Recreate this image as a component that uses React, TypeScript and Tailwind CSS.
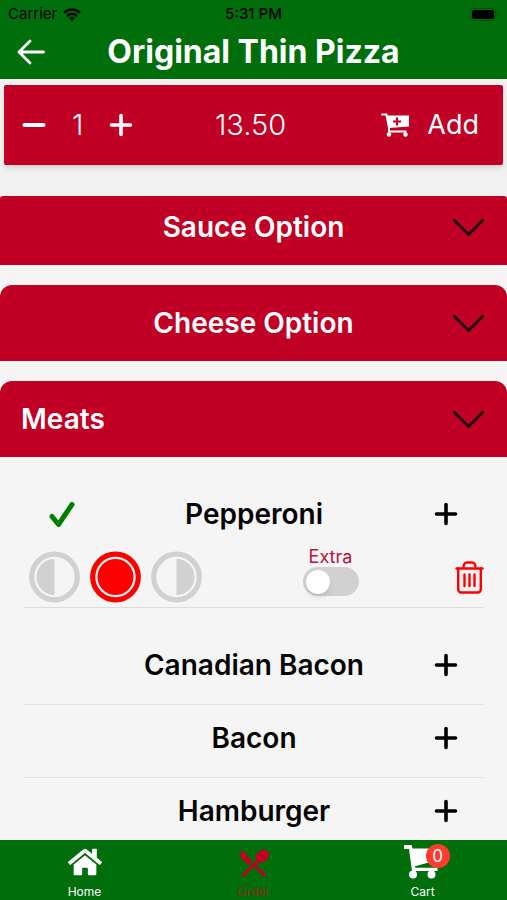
import { useState } from "react";
import { FaHome } from "react-icons/fa";
import { MdRestaurantMenu } from "react-icons/md";

const PORTIONS = ["left", "whole", "right"] as const;
type Portion = (typeof PORTIONS)[number];

const MEATS = ["Canadian Bacon", "Bacon", "Hamburger"];

function StatusBar() {
  return (
    <div className="grid h-7 grid-cols-3 items-center px-2 text-[15px] text-black">
      <div className="flex items-center gap-1.5">
        <span>Carrier</span>
        <svg width="18" height="13" viewBox="0 0 18 13" fill="none" stroke="currentColor" strokeWidth="2.4">
          <path d="M1 4.800C5.600.4 12.400.4 17 4.800" />
          <path d="M4 8c2.900-2.700 7.100-2.700 10 0" />
          <path d="M9 13 6 9.900c1.700-1.500 4.300-1.500 6 0Z" fill="currentColor" stroke="none" />
        </svg>
      </div>
      <span className="text-center font-medium">5:31 PM</span>
      <svg className="justify-self-end" width="29" height="13" viewBox="0 0 29 13">
        <rect x="0.5" y="0.5" width="25" height="12" rx="3.500" fill="none" stroke="#054f08" />
        <rect x="2" y="2" width="22" height="9" rx="2" fill="#000" />
        <path d="M27 4.500c1.500.8 1.500 3.200 0 4Z" fill="#054f08" />
      </svg>
    </div>
  );
}

function Plus() {
  return (
    <svg width="24" height="24" viewBox="0 0 24 24" fill="none" stroke="currentColor" strokeWidth="3.600" strokeLinecap="round">
      <path d="M12 2.500v19M2.500 12h19" />
    </svg>
  );
}

function AddCartIcon() {
  return (
    <svg width="28" height="24" viewBox="0 0 28 24" fill="none">
      <path d="M1 1.500h4.500L8 15v3.500" stroke="#fff" strokeWidth="2" strokeLinecap="round" strokeLinejoin="round" />
      <path d="M6 2.500h22v11L8 15Z" fill="#fff" />
      <path d="M8 18.500h16.500v2.500" stroke="#fff" strokeWidth="1.800" />
      <circle cx="8" cy="21.500" r="2.200" fill="#fff" />
      <circle cx="24.500" cy="21.500" r="2.200" fill="#fff" />
      <path d="M16 4.500v8M12 8.500h8" stroke="#c00024" strokeWidth="2.200" />
    </svg>
  );
}

function CartIcon() {
  return (
    <svg width="34" height="34" viewBox="0 0 34 34" fill="#fff">
      <path d="M0 0h7.500l1 3.500H34V15L11 21.200l.3 1.600h22.200V26H8L5 4H0Z" />
      <circle cx="9" cy="29.500" r="4" />
      <circle cx="27.500" cy="29.500" r="4" />
    </svg>
  );
}

function TrashIcon() {
  return (
    <svg width="29" height="33" viewBox="0 0 29 33" fill="none" stroke="#f00" strokeWidth="2.400" strokeLinecap="round" strokeLinejoin="round">
      <path d="M1.500 7.500h26" />
      <path d="M8.500 7C8.500 3.500 9.500 1.500 12 1.500h5c2.500 0 3.500 2 3.500 5.500" />
      <path d="M3.200 7.500V28.500a3 3 0 0 0 3 3h16.600a3 3 0 0 0 3-3V7.500" />
      <path d="M9.500 13.500v11.500M14.500 13.500v11.500M19.500 13.500v11.500" />
    </svg>
  );
}

function PortionIcon({ portion, active }: { portion: Portion; active: boolean }) {
  return (
    <svg width="51" height="52" viewBox="0 0 51 52" className={active ? "text-[#ff0000]" : "text-[#d1d1d1]"}>
      <circle cx="25.500" cy="26" r="22.800" fill="none" stroke="currentColor" strokeWidth="5.200" />
      {portion === "left" && <path d="M25.500 8a18 18 0 0 0 0 36Z" fill="currentColor" />}
      {portion === "whole" && <circle cx="25.500" cy="26" r="18" fill="currentColor" />}
      {portion === "right" && <path d="M25.500 8a18 18 0 0 1 0 36Z" fill="currentColor" />}
    </svg>
  );
}

function SectionHeader({ title, left, className }: { title: string; left?: boolean; className: string }) {
  return (
    <button className={`grid w-full grid-cols-[1fr_auto_1fr] items-center bg-[#c00024] px-[21px] text-[28px] font-semibold text-white ${className}`}>
      <span className={left ? "col-start-1 text-left" : "col-start-2"}>{title}</span>
      <svg className="col-start-3 justify-self-end" width="34" height="20" viewBox="0 0 34 20" fill="none" stroke="#100004" strokeWidth="2.600" strokeLinecap="round" strokeLinejoin="round">
        <path d="M2 3l14.500 14.500L31 3" />
      </svg>
    </button>
  );
}

function ToppingRow({ name, checked }: { name: string; checked?: boolean }) {
  return (
    <div className="grid h-9 grid-cols-[76px_1fr_76px] items-center">
      <div className="flex justify-center">
        {checked && (
          <svg width="26" height="27" viewBox="0 0 26 27" fill="none" stroke="#008000" strokeWidth="5" strokeLinecap="round" strokeLinejoin="round">
            <path d="M3 15.500 9.500 23.500 23 3.500" />
          </svg>
        )}
      </div>
      <h3 className="text-center text-[28px] font-semibold text-[#050505]">{name}</h3>
      <button aria-label={`Add ${name}`} className="flex justify-center">
        <Plus />
      </button>
    </div>
  );
}

export default function App() {
  const [qty, setQty] = useState(1);
  const [portion, setPortion] = useState<Portion>("whole");
  const [extra, setExtra] = useState(false);

  return (
    <div className="flex min-h-screen flex-col bg-[#f5f5f5] font-['Inter',sans-serif]">
      <header className="bg-[#006e0a]">
        <StatusBar />
        <div className="grid h-12 grid-cols-[45px_1fr_45px] items-center">
          <button aria-label="Back" className="flex justify-end text-white">
            <svg width="28" height="26" viewBox="0 0 28 26" fill="none" stroke="currentColor" strokeWidth="2.800" strokeLinecap="round" strokeLinejoin="round">
              <path d="M13 2 2 13l11 11M2 13h24.500" />
            </svg>
          </button>
          <h1 className="text-center text-[32px] font-bold text-white">Original Thin Pizza</h1>
        </div>
        <div className="h-[3px]" />
      </header>

      <div className="bg-[#f1f1f1] px-1 pt-[6px] pb-[31px]">
        <div className="grid h-20 grid-cols-[1fr_auto_1fr] items-center rounded-xs bg-[#c00024] pr-6 pl-[18px] text-white shadow-md">
          <div className="flex items-center gap-[26px]">
            <button aria-label="Less" onClick={() => setQty(Math.max(1, qty - 1))}>
              <svg width="24" height="24" viewBox="0 0 24 24" stroke="currentColor" strokeWidth="4" strokeLinecap="round">
                <path d="M2.500 12h19" />
              </svg>
            </button>
            <span className="text-[29px] font-light">{qty}</span>
            <button aria-label="More" onClick={() => setQty(qty + 1)}>
              <Plus />
            </button>
          </div>
          <span className="text-[29px] font-light">13.50</span>
          <button className="flex items-center gap-[18px] justify-self-end text-[27px]">
            <AddCartIcon />
            Add
          </button>
        </div>
      </div>

      <main>
        <SectionHeader title="Sauce Option" className="h-[69px] rounded-t-[3px] pb-[7px]" />
        <SectionHeader title="Cheese Option" className="mt-5 h-19 rounded-t-xl" />
        <SectionHeader title="Meats" left className="mt-5 h-19 rounded-t-xl" />

        <div className="pt-6 pr-[23px] pl-6">
          <div className="border-b border-[#dcdcdc] pt-3">
            <ToppingRow name="Pepperoni" checked />
            <div className="mt-[18px] flex h-15 items-center pl-[5px]">
              <div role="radiogroup" aria-label="Portion" className="flex gap-[10px]">
                {PORTIONS.map((p) => (
                  <label key={p} className="relative cursor-pointer">
                    <input
                      type="radio"
                      name="portion"
                      aria-label={p}
                      className="sr-only"
                      checked={portion === p}
                      onChange={() => setPortion(p)}
                    />
                    <PortionIcon portion={p} active={portion === p} />
                  </label>
                ))}
              </div>
              <div className="flex flex-1 justify-center self-start pl-1">
                <label className="flex flex-col items-center text-[18px] leading-5 text-[#b8123c]">
                  Extra
                  <input
                    type="checkbox"
                    role="switch"
                    checked={extra}
                    onChange={(e) => setExtra(e.target.checked)}
                    className="flex h-[29px] w-14 appearance-none items-center rounded-full bg-[#d1d1d1] px-[3px] before:size-6 before:rounded-full before:bg-white before:shadow-md checked:justify-end checked:bg-[#c00024]"
                  />
                </label>
              </div>
              <button aria-label="Remove Pepperoni">
                <TrashIcon />
              </button>
            </div>
          </div>

          <div className="pt-6">
            {MEATS.map((name) => (
              <div key={name} className="border-b border-[#e2e2e2] pt-3 pb-6 last:border-b-0 last:pb-[14px]">
                <ToppingRow name={name} />
              </div>
            ))}
          </div>
        </div>
      </main>

      <nav className="sticky bottom-0 mt-auto grid h-15 grid-cols-3 bg-[#006e0a] text-[12px] leading-4 text-white">
        <a href="#home" className="flex flex-col items-center justify-between pt-[5px]">
          <FaHome size={34} />
          Home
        </a>
        <a href="#order" className="flex flex-col items-center justify-between pt-[5px] text-[#c00024]">
          <MdRestaurantMenu size={36} />
          <span className="text-[#8c2a1a]">Order</span>
        </a>
        <a href="#cart" className="flex flex-col items-center justify-between pt-[5px]">
          <span className="relative pr-1">
            <CartIcon />
            <span className="absolute -top-px left-[22px] flex size-6 items-center justify-center rounded-full bg-[#ff3b30] text-[17px]">0</span>
          </span>
          Cart
        </a>
      </nav>
    </div>
  );
}
